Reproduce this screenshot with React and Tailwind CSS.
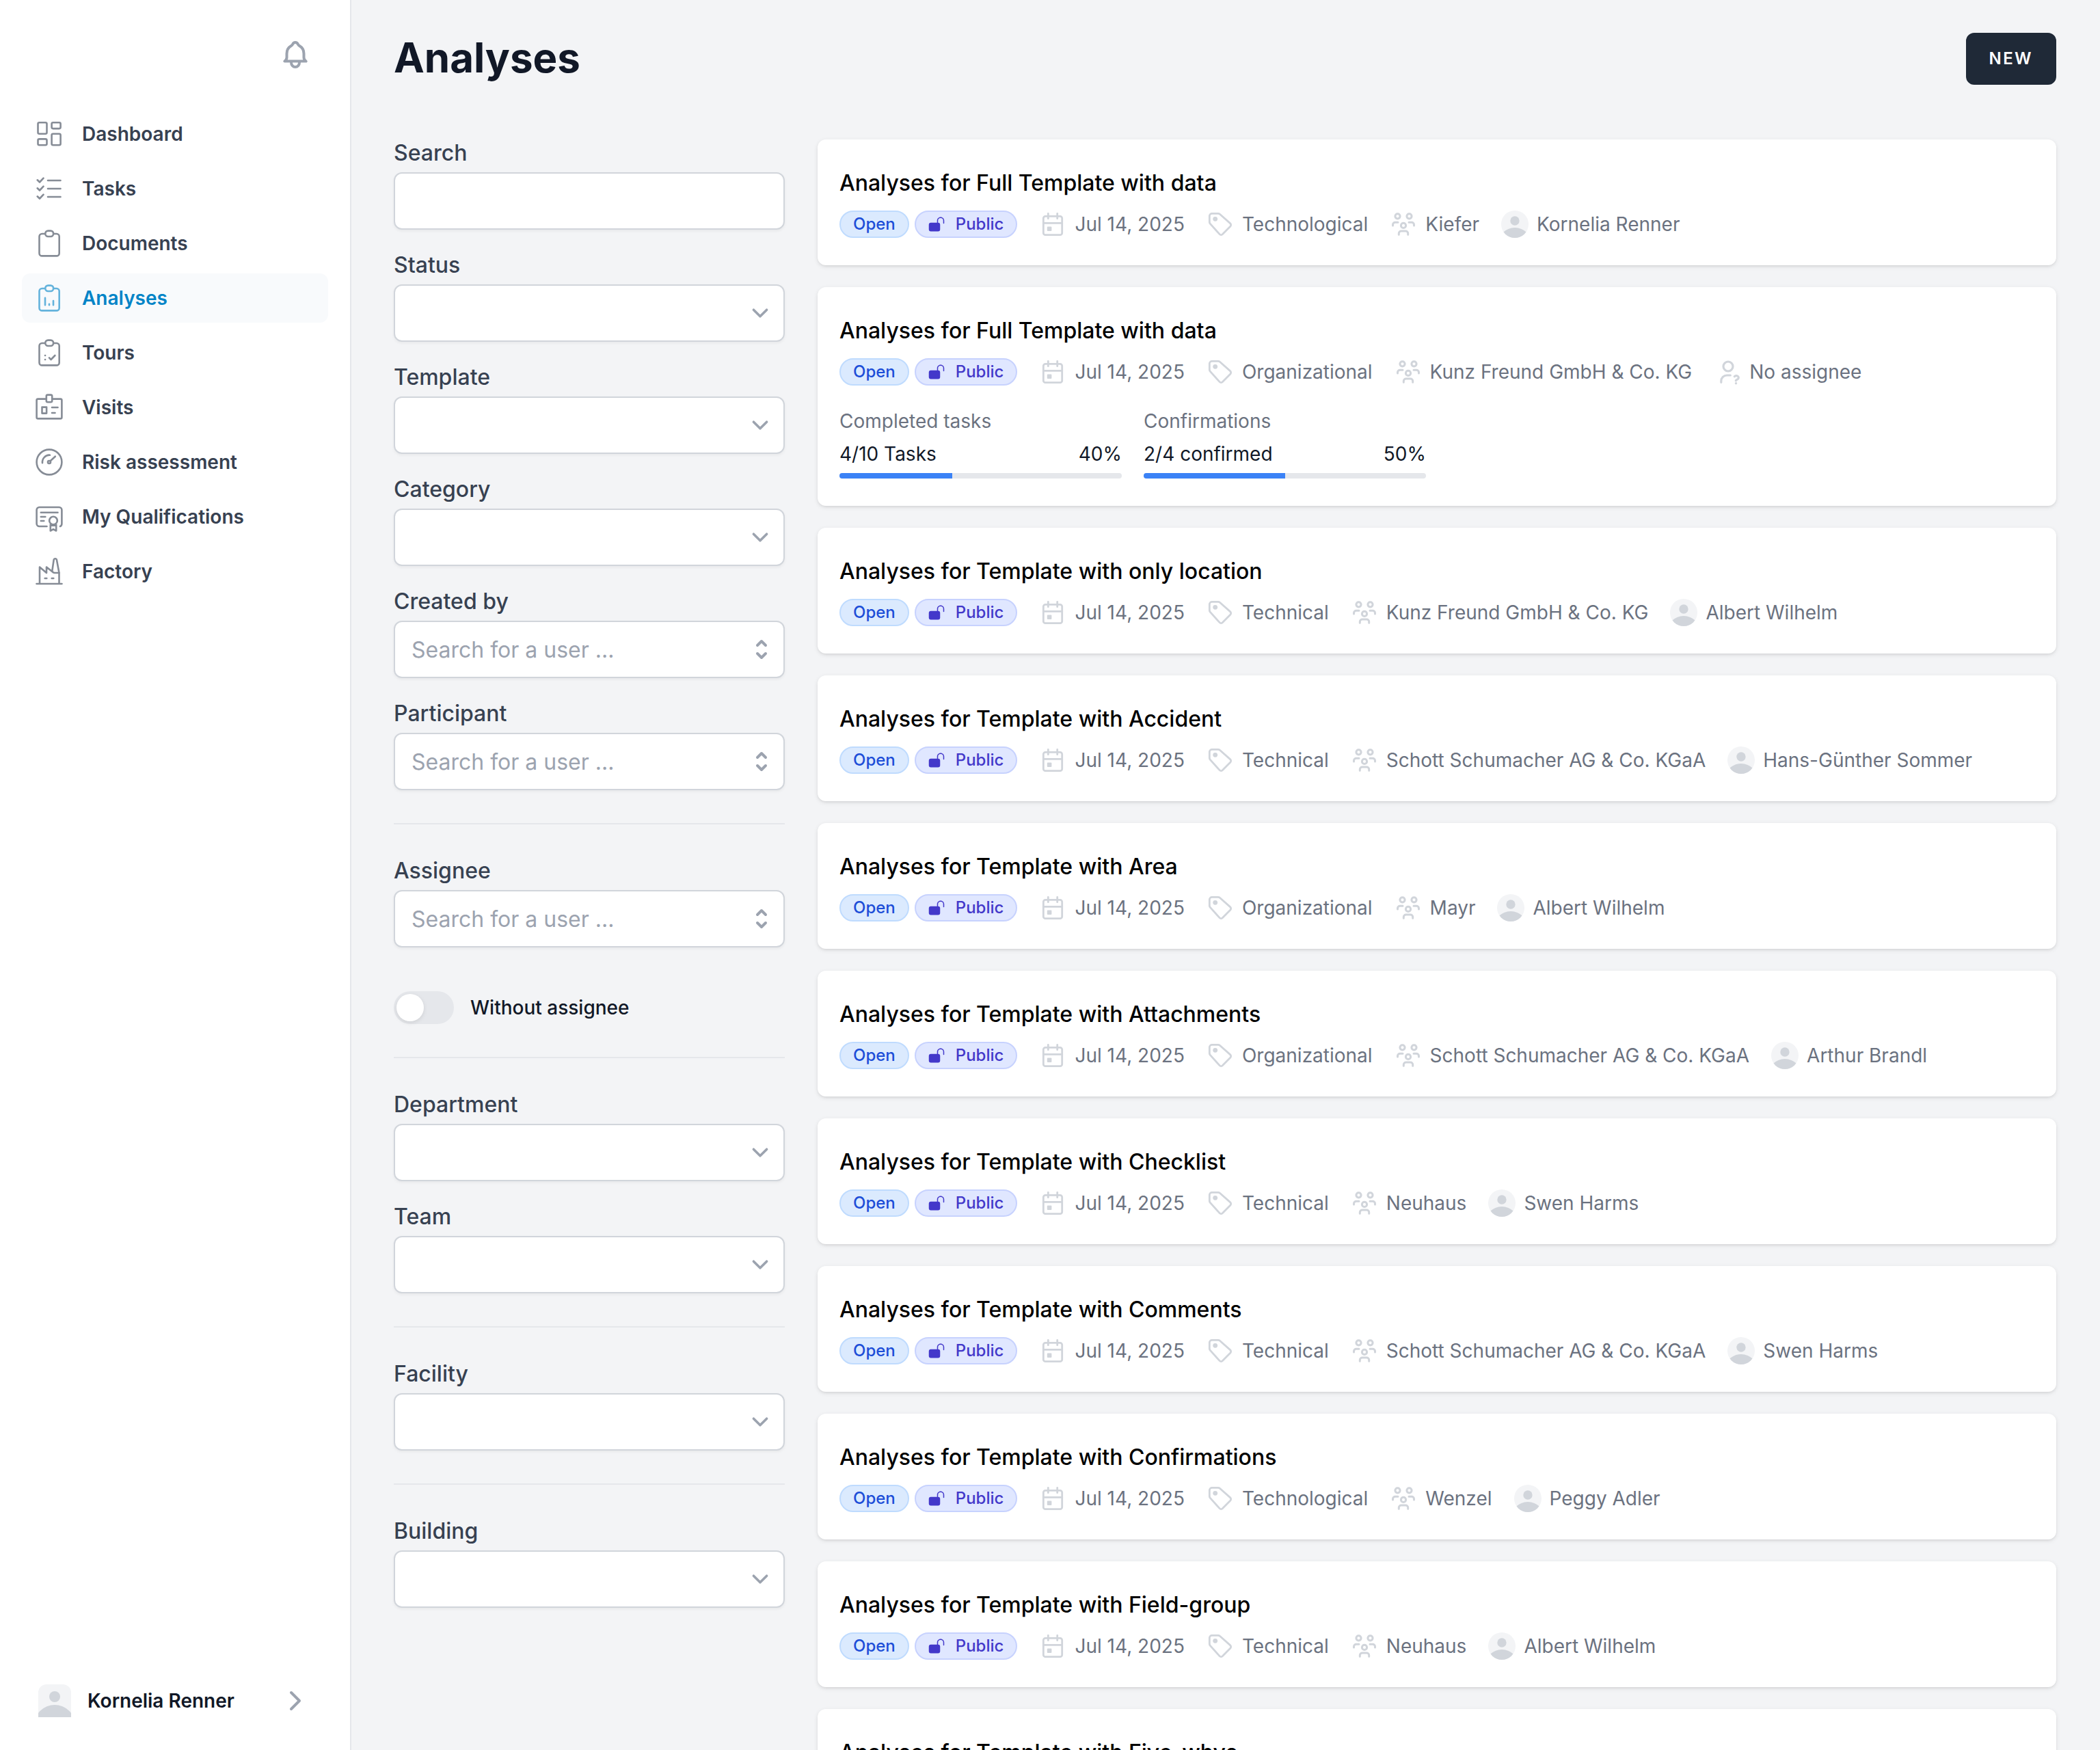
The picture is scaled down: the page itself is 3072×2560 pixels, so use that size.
import clsx from "clsx";
import { HiLockOpen } from "react-icons/hi2";

const CLIPBOARD = (
  <>
    <path d="M17.5 10h-4a4 4 0 0 0-4 4v24.4a4 4 0 0 0 4 4h21.2a4 4 0 0 0 4-4V14a4 4 0 0 0-4-4h-4" />
    <rect x="18.3" y="5.6" width="11.8" height="8.4" rx="4" />
  </>
);

const navItems = [
  {
    name: "Dashboard",
    icon: (
      <>
        <rect x="7.5" y="7.3" width="13" height="16.4" rx="2" />
        <rect x="27.6" y="7.3" width="13" height="8.8" rx="2" />
        <rect x="7.5" y="31.4" width="13" height="8.8" rx="2" />
        <rect x="27.6" y="23.8" width="13" height="16.4" rx="2" />
      </>
    ),
  },
  {
    name: "Tasks",
    icon: (
      <>
        <path d="M6.7 11.3l3.3 3.2 5.5-5.8M6.7 23.3l3.3 3.2 5.5-5.8M6.7 35.3l3.3 3.2 5.5-5.8" />
        <path d="M22 12h18.5M22 24h18.5M22 36h18.5" />
      </>
    ),
  },
  { name: "Documents", icon: CLIPBOARD },
  {
    name: "Analyses",
    current: true,
    icon: (
      <>
        {CLIPBOARD}
        <path d="M18 23.8v10.4M24 32.8v1.4M30 28v6.2" />
      </>
    ),
  },
  {
    name: "Tours",
    icon: (
      <>
        {CLIPBOARD}
        <path d="M18 28h.1M18 34h.1M24 31.4l2.6 2.6 5.8-6" />
      </>
    ),
  },
  {
    name: "Visits",
    icon: (
      <>
        <path d="M18.5 11.6H7.6a2 2 0 0 0-2 2v24.8a2 2 0 0 0 2 2h32.8a2 2 0 0 0 2-2V13.6a2 2 0 0 0-2-2H29.5" />
        <rect x="19.8" y="5.6" width="8.4" height="10.6" rx="2" />
        <rect x="13.5" y="23.6" width="6.6" height="9" />
        <path d="M28 24h8.5M28 32h4.5" />
      </>
    ),
  },
  {
    name: "Risk assessment",
    icon: (
      <>
        <circle cx="24" cy="24" r="18.4" />
        <path d="M14 25.2c-.5-6.500 4.500-12 11-11.500M26 22l6.800-6.300" />
        <circle cx="24" cy="24" r="2" />
      </>
    ),
  },
  {
    name: "My Qualifications",
    icon: (
      <>
        <path d="M20.5 38H9.6a4 4 0 0 1-4-4V14a4 4 0 0 1 4-4h28.8a4 4 0 0 1 4 4v20c0 2-.9 3.4-2.4 4" />
        <path d="M11.8 17.8h24.7M11.8 24h6.5M11.8 30h4.5" />
        <circle cx="30" cy="29.6" r="5.8" />
        <path d="M25.8 35.5v9l4.2-2.3 4.2 2.3v-9M26 36.8h8" />
      </>
    ),
  },
  {
    name: "Factory",
    icon: (
      <>
        <path d="M5.5 42h37M10 42V17.5L20 26v-8.5l9.500 7.600c.8.600 1.600.9 2.500.9h6.500v16" />
        <path d="M28.2 24l2.5-17.2c.2-1 .8-1.5 1.7-1.5h.8c.9 0 1.5.5 1.7 1.5L38.5 26" />
        <path d="M17.7 34h2.6M27.7 34h2.6" />
      </>
    ),
  },
];

const analyses = [
  { title: "Full Template with data", category: "Technological", team: "Kiefer", assignee: "Kornelia Renner" },
  {
    title: "Full Template with data",
    category: "Organizational",
    team: "Kunz Freund GmbH & Co. KG",
    progress: [
      { label: "Completed tasks", text: "4/10 Tasks", percent: 40 },
      { label: "Confirmations", text: "2/4 confirmed", percent: 50 },
    ],
  },
  { title: "Template with only location", category: "Technical", team: "Kunz Freund GmbH & Co. KG", assignee: "Albert Wilhelm" },
  { title: "Template with Accident", category: "Technical", team: "Schott Schumacher AG & Co. KGaA", assignee: "Hans-Günther Sommer" },
  { title: "Template with Area", category: "Organizational", team: "Mayr", assignee: "Albert Wilhelm" },
  { title: "Template with Attachments", category: "Organizational", team: "Schott Schumacher AG & Co. KGaA", assignee: "Arthur Brandl" },
  { title: "Template with Checklist", category: "Technical", team: "Neuhaus", assignee: "Swen Harms" },
  { title: "Template with Comments", category: "Technical", team: "Schott Schumacher AG & Co. KGaA", assignee: "Swen Harms" },
  { title: "Template with Confirmations", category: "Technological", team: "Wenzel", assignee: "Peggy Adler" },
  { title: "Template with Field-group", category: "Technical", team: "Neuhaus", assignee: "Albert Wilhelm" },
  { title: "Template with Five-whys", category: "Technical", team: "Neuhaus", assignee: "Albert Wilhelm" },
];

const Icon = ({ size = 40, strokeWidth = 2.8, className, children }) => (
  <svg
    viewBox={`0 0 ${size} ${size}`}
    fill="none"
    stroke="currentColor"
    strokeWidth={strokeWidth}
    strokeLinecap="round"
    strokeLinejoin="round"
    aria-hidden="true"
    className={clsx("shrink-0", className)}
  >
    {children}
  </svg>
);

const Avatar = ({ className }) => (
  <svg viewBox="0 0 48 48" aria-hidden="true" className={clsx("shrink-0 overflow-hidden bg-[#f3f4f6] text-[#d1d5db]", className)}>
    <circle cx="24" cy="18" r="8" fill="currentColor" />
    <circle cx="24" cy="60" r="30" fill="currentColor" />
  </svg>
);

const Sidebar = () => (
  <aside className="flex w-[512px] shrink-0 flex-col bg-white">
    <div className="flex justify-end px-14 pt-14">
      <button type="button" aria-label="Notifications" className="text-[#9ca3af]">
        <Icon size={48} strokeWidth={4} className="size-12">
          <path d="M8.3 33.6c2-1.2 3.2-2.6 3.2-5.6v-5.5c0-5.5 2.5-9.2 6.5-11.5 1-.6 1.7-1.3 2.1-2.3C20.9 6.9 22.2 6 24 6s3.1.9 3.9 2.7c.4 1 1.1 1.7 2.1 2.3 4 2.3 6.5 6 6.5 11.5V28c0 3 1.2 4.4 3.2 5.6z" />
          <path d="M18 35.5a6 6.5 0 0 0 12 0" />
        </Icon>
      </button>
    </div>
    <nav className="mt-14 flex flex-col gap-2 px-8">
      {navItems.map((item) => (
        <a
          key={item.name}
          href="#"
          className={clsx(
            "flex items-center gap-6 rounded-xl px-4 py-3 text-[28px] leading-10 font-semibold",
            item.current ? "bg-[#f8fafc] text-[#0284c7]" : "text-[#374151]"
          )}
        >
          <Icon size={48} strokeWidth={2.6} className="size-12 opacity-60">
            {item.icon}
          </Icon>
          {item.name}
        </a>
      ))}
    </nav>
    <button type="button" className="mt-auto flex items-center px-14 py-12 text-left text-[28px] leading-10 font-semibold text-[#111827]">
      <Avatar className="size-12 rounded-t-xl" />
      <span className="ml-6 flex-1">Kornelia Renner</span>
      <Icon size={48} strokeWidth={4} className="size-12 text-[#9ca3af]">
        <path d="M18 12l12 12-12 12" />
      </Icon>
    </button>
  </aside>
);

const controlClass =
  "h-[84px] w-full appearance-none rounded-xl border-2 border-[#d1d5db] bg-white px-6 text-[32px] text-[#111827] shadow-[0_2px_4px_rgba(0,0,0,0.05)] placeholder:text-[#9ca3af]";

const Field = ({ id, label, children }) => (
  <div>
    <label htmlFor={id} className="block text-[32px] leading-10 font-medium text-[#374151]">
      {label}
    </label>
    <div className="relative mt-2">{children}</div>
  </div>
);

const SelectField = ({ id, label }) => (
  <Field id={id} label={label}>
    <select id={id} className={controlClass} defaultValue="">
      <option value=""></option>
    </select>
    <Icon size={48} strokeWidth={3.6} className="pointer-events-none absolute inset-y-0 right-3 my-auto size-12 text-[#9ca3af]">
      <path d="M14.4 19.2l9.6 9.6 9.6-9.6" />
    </Icon>
  </Field>
);

const UserField = ({ id, label }) => (
  <Field id={id} label={label}>
    <input id={id} type="text" placeholder="Search for a user ..." className={controlClass} />
    <button type="button" aria-label="Show users" className="absolute inset-y-0 right-3.5 text-[#9ca3af]">
      <Icon strokeWidth={4} className="size-10">
        <path d="M14 14l6-6 6 6M14 26l6 6 6-6" />
      </Icon>
    </button>
  </Field>
);

const Divider = () => <hr className="my-4 border-t-2 border-[#e5e7eb]" />;

const Filters = () => (
  <form className="flex flex-col gap-8">
    <Field id="search" label="Search">
      <input id="search" type="text" className={controlClass} />
    </Field>
    <SelectField id="status" label="Status" />
    <SelectField id="template" label="Template" />
    <SelectField id="category" label="Category" />
    <UserField id="created-by" label="Created by" />
    <UserField id="participant" label="Participant" />
    <Divider />
    <UserField id="assignee" label="Assignee" />
    <div className="mt-8 flex items-center gap-6">
      <input
        id="without-assignee"
        type="checkbox"
        role="switch"
        className="flex h-12 w-22 appearance-none items-center rounded-full bg-[#e5e7eb] p-1 before:size-10 before:rounded-full before:bg-white before:shadow-[0_2px_6px_rgba(0,0,0,0.1)] checked:bg-[#0284c7] checked:before:translate-x-10"
      />
      <label htmlFor="without-assignee" className="text-[28px] leading-10 font-medium text-[#111827]">
        Without assignee
      </label>
    </div>
    <Divider />
    <SelectField id="department" label="Department" />
    <SelectField id="team" label="Team" />
    <Divider />
    <SelectField id="facility" label="Facility" />
    <Divider />
    <SelectField id="building" label="Building" />
  </form>
);

const Meta = ({ icon, children }) => (
  <div className="flex items-center gap-3">
    {icon}
    {children}
  </div>
);

const metaIcon = "size-10 text-[#d1d5db]";

const Progress = ({ label, text, percent }) => (
  <div className="flex flex-col gap-2 text-[28px] leading-10 text-[#111827]">
    <div className="text-[#6b7280]">{label}</div>
    <div className="flex justify-between">
      <span>{text}</span>
      <span>{percent}%</span>
    </div>
    <div className="h-2 overflow-hidden rounded-full bg-[#e5e7eb]">
      <div className="h-full bg-[#3b82f6]" style={{ width: `${percent}%` }} />
    </div>
  </div>
);

const AnalysisCard = ({ title, category, team, assignee, progress }) => (
  <li className="rounded-xl bg-white px-8 py-10 shadow-[0_2px_6px_rgba(0,0,0,0.1),0_2px_4px_-2px_rgba(0,0,0,0.1)]">
    <h2 className="text-[32px] leading-12 font-medium text-black">Analyses for {title}</h2>
    <div className="mt-4 flex items-center gap-8 text-[28px] leading-10 text-[#6b7280]">
      <div className="flex gap-2 text-2xl font-medium">
        <span className="flex h-10 items-center rounded-full border-2 border-[#bfdbfe] bg-[#dbeafe] px-[18px] text-[#1d4ed8]">
          Open
        </span>
        <span className="flex h-10 items-center gap-4 rounded-full border-2 border-[#c7d2fe] bg-[#e0e7ff] px-[18px] text-[#4338ca]">
          <HiLockOpen className="size-6" />
          Public
        </span>
      </div>
      <Meta
        icon={
          <Icon className={metaIcon}>
            <rect x="6.3" y="8.3" width="27.4" height="27.4" rx="3" />
            <path d="M6.3 18.3h27.4M13.3 4.3v7.4M26.7 4.3v7.4" />
            <rect x="12.8" y="24.5" width="4.6" height="4.6" fill="currentColor" strokeWidth="2" />
          </Icon>
        }
      >
        Jul 14, 2025
      </Meta>
      <Meta
        icon={
          <Icon className={metaIcon}>
            <path d="M4.3 16.8V8A3.7 3.7 0 0 1 8 4.3h8.8c1 0 1.9.3 2.6 1l15.1 13.3c1.5 1.3 1.5 3.2.2 4.6L23.5 34.6c-1.2 1.3-3.2 1.3-4.4 0L5.4 19.4c-.7-.7-1.1-1.6-1.1-2.6z" />
            <circle cx="12.7" cy="12.3" r="3.4" fill="currentColor" stroke="none" />
          </Icon>
        }
      >
        {category}
      </Meta>
      <Meta
        icon={
          <Icon strokeWidth={3} className={metaIcon}>
            <circle cx="11.5" cy="8.3" r="3.6" />
            <circle cx="28.5" cy="8.3" r="3.6" />
            <circle cx="20" cy="21.9" r="3.6" />
            <path d="M4.5 22v-1.2a3.5 3.5 0 0 1 3.5-3.5h4M35.5 22v-1.2a3.5 3.5 0 0 0-3.5-3.5h-4" />
            <path d="M13.3 35.3v-1.8a3.5 3.5 0 0 1 3.5-3.5h6.4a3.5 3.5 0 0 1 3.5 3.5v1.8" />
          </Icon>
        }
      >
        {team}
      </Meta>
      {assignee ? (
        <Meta icon={<Avatar className="size-10 rounded-full" />}>{assignee}</Meta>
      ) : (
        <Meta
          icon={
            <Icon strokeWidth={3.2} className={metaIcon}>
              <circle cx="21" cy="12" r="7" />
              <path d="M10.8 35.3v-1.8a8.5 8.5 0 0 1 8.5-8.5h5" />
              <path d="M30.3 26.8c1.7-2.1 6-1.2 6 2 0 2.5-3.6 2.2-4 4" />
              <circle cx="32.5" cy="36.8" r="1.7" fill="currentColor" stroke="none" />
            </Icon>
          }
        >
          No assignee
        </Meta>
      )}
    </div>
    {progress && (
      <div className="mt-8 grid grid-cols-4 gap-8">
        {progress.map((p) => (
          <Progress key={p.label} {...p} />
        ))}
      </div>
    )}
  </li>
);

export default function App() {
  return (
    <div className="flex h-screen overflow-hidden bg-[#f3f4f6] font-['Inter',sans-serif]">
      <Sidebar />
      <main className="min-w-0 flex-1 border-l-2 border-[#e5e7eb] pt-12 pr-16 pl-[62px]">
        <div className="flex items-start justify-between">
          <h1 className="text-6xl leading-[72px] font-bold text-[#111827]">Analyses</h1>
          <button
            type="button"
            className="rounded-xl border-2 border-[#1f2937] bg-[#1f2937] px-8 py-5 text-2xl leading-8 font-semibold tracking-widest text-white"
          >
            NEW
          </button>
        </div>
        <div className="mt-20 grid grid-cols-4 items-start gap-12">
          <Filters />
          <ul className="col-span-3 flex flex-col gap-8">
            {analyses.map((analysis, i) => (
              <AnalysisCard key={i} {...analysis} />
            ))}
          </ul>
        </div>
      </main>
    </div>
  );
}
